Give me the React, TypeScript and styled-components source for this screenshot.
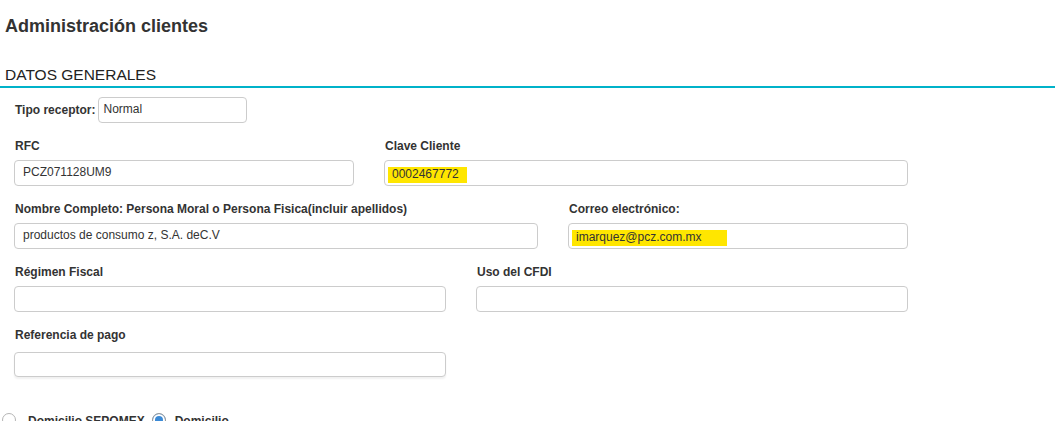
import React from "react";
import styled, { createGlobalStyle } from "styled-components";

const GlobalStyle = createGlobalStyle`
  body {
    margin: 0;
    background: #fff;
    font-family: "Liberation Sans", Arial, sans-serif;
    color: #333;
  }
`;

const Page = styled.div`
  width: 1055px;
  height: 421px;
  overflow: hidden;
`;

const Title = styled.h1`
  margin: 16px 0 0 5px;
  font-size: 18px;
  line-height: 20px;
  font-weight: bold;
  color: #333;
`;

const SectionHeader = styled.h2`
  margin: 30px 0 0;
  padding: 0 0 2px 5px;
  font-size: 15.5px;
  line-height: 18px;
  font-weight: normal;
  color: #222;
  border-bottom: 2px solid #00b2c9;
`;

const Form = styled.div`
  width: 894px;
  padding-left: 14px;
`;

const InlineRow = styled.div`
  display: flex;
  align-items: flex-start;
  margin: 9px 0 15px;
`;

const InlineLabel = styled.label`
  margin: 5px 3px 0 1px;
  font-size: 12px;
  line-height: 16px;
  font-weight: bold;
  color: #333;
`;

interface RowProps {
  $cols: string;
}

const Row = styled.div<RowProps>`
  display: grid;
  grid-template-columns: ${(p) => p.$cols};
  column-gap: 30px;
`;

interface GroupProps {
  $last?: boolean;
}

const Group = styled.div<GroupProps>`
  margin-bottom: ${(p) => (p.$last ? "0" : "15px")};
`;

interface LabelProps {
  $gap?: number;
}

const Label = styled.label<LabelProps>`
  display: block;
  margin: 0 0 ${(p) => p.$gap ?? 6}px 1px;
  font-size: 12px;
  line-height: 16px;
  font-weight: bold;
  color: #333;
`;

interface FieldProps {
  $width?: number;
  $height?: number;
  $padLeft?: number;
  $shadow?: boolean;
}

const Field = styled.div<FieldProps>`
  box-sizing: border-box;
  width: ${(p) => (p.$width ? `${p.$width}px` : "100%")};
  height: ${(p) => p.$height ?? 26}px;
  padding: 3px 8px 0 ${(p) => p.$padLeft ?? 8}px;
  border: 1px solid #ccc;
  border-radius: 4px;
  background: #fff;
  font-size: 12px;
  line-height: 16px;
  color: #333;
  white-space: nowrap;
  overflow: hidden;
  box-shadow: ${(p) => (p.$shadow ? "0 2px 2px rgba(0, 0, 0, 0.06)" : "none")};
`;

interface MarkProps {
  $padRight: number;
}

const Mark = styled.span<MarkProps>`
  display: block;
  width: fit-content;
  height: 16px;
  margin-top: 3px;
  padding: 0 ${(p) => p.$padRight}px 0 4px;
  background: #ffe600;
  line-height: 15px;
  color: #333;
`;

const RadioRow = styled.div`
  display: flex;
  align-items: flex-start;
  margin-top: 36px;
  padding-left: 2px;
`;

interface RadioProps {
  $checked?: boolean;
}

const Radio = styled.span<RadioProps>`
  box-sizing: border-box;
  width: 14px;
  height: 14px;
  border-radius: 50%;
  border: 1px solid ${(p) => (p.$checked ? "#9a9a9a" : "#b5b5b5")};
  background: ${(p) => (p.$checked ? "#3b8ad6" : "#fff")};
  box-shadow: ${(p) => (p.$checked ? "inset 0 0 0 2px #fff" : "none")};
`;

interface RadioLabelProps {
  $gapLeft: number;
  $gapRight?: number;
}

const RadioLabel = styled.span<RadioLabelProps>`
  margin: 0 ${(p) => p.$gapRight ?? 0}px 0 ${(p) => p.$gapLeft}px;
  font-size: 12px;
  line-height: 16px;
  font-weight: bold;
  color: #333;
`;

const App = () => {
  return (
    <Page>
      <GlobalStyle />
      <Title>Administración clientes</Title>
      <SectionHeader>DATOS GENERALES</SectionHeader>
      <Form>
        <InlineRow>
          <InlineLabel>Tipo receptor:</InlineLabel>
          <Field $width={149} $padLeft={4}>
            Normal
          </Field>
        </InlineRow>

        <Row $cols="340px 524px">
          <Group>
            <Label>RFC</Label>
            <Field>PCZ071128UM9</Field>
          </Group>
          <Group>
            <Label>Clave Cliente</Label>
            <Field $padLeft={3}>
              <Mark $padRight={8}>0002467772</Mark>
            </Field>
          </Group>
        </Row>

        <Row $cols="524px 340px">
          <Group>
            <Label>Nombre Completo: Persona Moral o Persona Fisica(incluir apellidos)</Label>
            <Field>productos de consumo z, S.A. deC.V</Field>
          </Group>
          <Group>
            <Label>Correo electrónico:</Label>
            <Field $padLeft={3}>
              <Mark $padRight={25}>imarquez@pcz.com.mx</Mark>
            </Field>
          </Group>
        </Row>

        <Row $cols="432px 432px">
          <Group>
            <Label>Régimen Fiscal</Label>
            <Field />
          </Group>
          <Group>
            <Label>Uso del CFDI</Label>
            <Field />
          </Group>
        </Row>

        <Row $cols="432px">
          <Group $last>
            <Label $gap={9}>Referencia de pago</Label>
            <Field $height={25} $shadow />
          </Group>
        </Row>
      </Form>

      <RadioRow>
        <Radio />
        <RadioLabel $gapLeft={12} $gapRight={7}>
          Domicilio SEPOMEX
        </RadioLabel>
        <Radio $checked />
        <RadioLabel $gapLeft={9}>Domicilio</RadioLabel>
      </RadioRow>
    </Page>
  );
};

export default App;
